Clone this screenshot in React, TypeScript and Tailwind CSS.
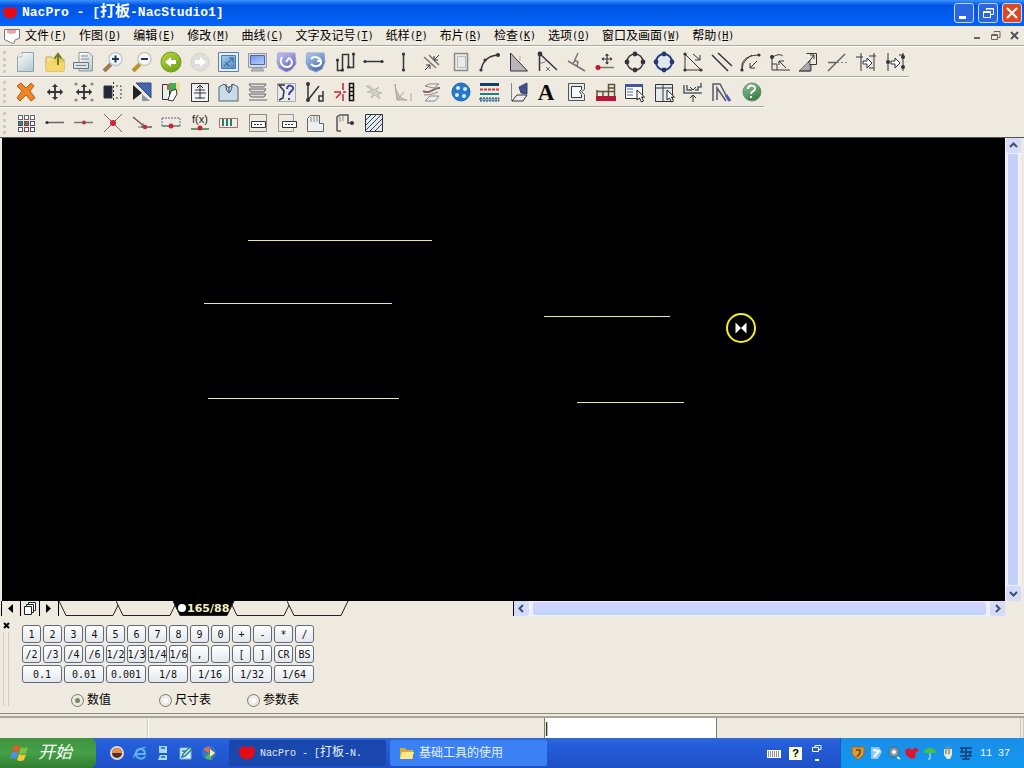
import { useState } from "react";
import type { ReactNode } from "react";

const INK = "#33343a";

type Tool = { name: string; art: ReactNode };

const Dot = ({ x, y, c = INK, r = 1.6 }: { x: number; y: number; c?: string; r?: number }) => (
  <circle cx={x} cy={y} r={r} fill={c} stroke="none" />
);

const Cursor = ({ x, y }: { x: number; y: number }) => (
  <path d={`M${x} ${y}v10l2.500-2 2 4 2-1-2-4h3z`} fill="#fff" stroke="#222" />
);

const Move = ({ x, y, s }: { x: number; y: number; s: number }) => (
  <g transform={`translate(${x} ${y}) scale(${s})`}>
    <path d="M-8 0H8M0-8V8" strokeWidth="2" />
    <path d="M-9 0l3.500-3.500v7zM9 0L5.500-3.500v7zM0-9l-3.500 3.500h7zM0 9l-3.500-3.500h7z" fill={INK} stroke="none" />
  </g>
);

const drawTools: Tool[] = [
  { name: "New", art: <><path d="M9 2.500H20.500V21.500H4.500V7z" fill="url(#paper)" stroke="#8fa3ab" /><path d="M9 2.500V7H4.500" fill="#fff" stroke="#a9b8be" /></> },
  { name: "Open", art: <><path d="M4 7h6l2 2h10v12H4z" fill="url(#gold)" stroke="#c9a241" /><path d="M4 13l18-1v9H4z" fill="#f6d76b" stroke="none" /><path d="M16 15V5M12.500 8.500L16 4l3.500 4.500" stroke="#687c1c" strokeWidth="2" /></> },
  { name: "Print", art: <><path d="M8 2.500h10l3.500 3.500v15H8z" fill="url(#paper)" stroke="#8d979c" /><path d="M2.500 12.500h15v6h-15z" fill="#dce2e4" stroke="#6d767a" /><path d="M5 15.500h10M10 6h7M10 9h8" stroke="#7d888d" /></> },
  { name: "Zoom in", art: <><path d="M11 14L4 21" stroke="#9c7a50" strokeWidth="4" /><circle cx="15.500" cy="9" r="6.500" fill="#f4f8fb" stroke="#c3cad3" strokeWidth="1.500" /><path d="M12 9h7M15.500 5.500v7" stroke="#26335f" strokeWidth="2" /></> },
  { name: "Zoom out", art: <><path d="M11 14L4 21" stroke="#b6952d" strokeWidth="4" /><circle cx="15.500" cy="9" r="6.500" fill="#f8f8f1" stroke="#c9cac6" strokeWidth="1.500" /><path d="M12 9h7" stroke="#26335f" strokeWidth="2" /></> },
  { name: "Back", art: <><circle cx="13" cy="12" r="10" fill="url(#lime)" stroke="#6f9b17" /><path d="M7 12l6-5v3h5v4h-5v3z" fill="#fff" stroke="none" /></> },
  { name: "Forward", art: <><circle cx="13" cy="12" r="9" fill="#dfdfda" stroke="#d3d3cd" /><path d="M19 12l-6-5v3H8v4h5v3z" fill="#fff" stroke="none" /></> },
  { name: "Fit", art: <><path d="M2.500 2.500h20v19h-20z" fill="#e6eef7" stroke="#5b7fa8" /><path d="M5.500 5.500h14v13h-14z" fill="url(#sky)" stroke="#4b7db3" /><path d="M8 16l9-8M13 8h4v4M9 12l4 4" stroke="#2f5d91" /></> },
  { name: "Full screen", art: <><path d="M3.500 3.500h18v14h-18z" fill="#d9dadd" stroke="#969aa3" /><path d="M5.500 5.500h14v9h-14z" fill="url(#screen)" stroke="#4a66b0" /><path d="M8 18h9l2 3H6z" fill="#b9bbc0" stroke="#989ba1" /></> },
  { name: "Undo", art: <><path d="M4 3h17l1 11-5 6-5 2-7-4-2-6z" fill="url(#violet)" stroke="#a3a2d6" /><path d="M8 7c-3 5 0 10 5 10s7-6 2-9l-3 4" fill="none" stroke="#fff" strokeWidth="2" /></> },
  { name: "Redo", art: <><path d="M4 3h17l1 9-3 7-6 3-7-3-3-6z" fill="url(#steel)" stroke="#8ea6d2" /><path d="M8 9c4-4 10-1 10 3s-6 6-10 2M18 11l-4 0" fill="none" stroke="#fff" strokeWidth="2" /></> },
  { name: "Polyline", art: <><path d="M5.500 11v9.500h5v-16h6v13h5v-14" strokeWidth="1.500" /><Dot x={5.5} y={10} /><Dot x={10.500} y={20} /><Dot x={16.500} y={17} /><Dot x={21.500} y={4} /></> },
  { name: "Horizontal line", art: <><path d="M4 11.500h17" strokeWidth="1.500" /><Dot x={4} y={11.5} /><Dot x={21} y={11.5} /></> },
  { name: "Vertical line", art: <><path d="M13.500 3v18" strokeWidth="1.500" /><Dot x={13.5} y={4} /><Dot x={13.5} y={20} /></> },
  { name: "Parallel distance", art: <><path d="M5 7l12 11M10 5l10 10" stroke="#777" strokeWidth="1.500" /><path d="M20 5l-5 5v-4M15 10h4M6 20l5-5v4M11 15H7" /></> },
  { name: "Rectangle", art: <><path d="M6.500 3.500h13v17h-13z" fill="#e9e9e7" stroke="#8a8a8a" strokeWidth="1.500" /><path d="M9.500 6.500v11h8v-11z" fill="none" stroke="#bbb" /></> },
  { name: "Arc", art: <><path d="M4 21c1-9 6-15 17-16" strokeWidth="1.500" /><Dot x={4} y={20} /><Dot x={8} y={10} /><Dot x={21} y={5} r={2} /></> },
  { name: "Set square", art: <><path d="M4.500 3v18h17z" fill="#b7b7b7" /><path d="M14 6v5" stroke="#c98" /></> },
  { name: "Angle", art: <><path d="M4.500 4v17M5 4L22 20" strokeWidth="1.500" /><path d="M5 13c5 0 6-2 6-4M11 17l4 4M15 17l-4 4" stroke="#777" /><Dot x={5} y={4} r={2.4} /></> },
  { name: "Perpendicular", art: <><path d="M4 11l17 10M14 3L9 14M10 10l4 2-1 4" stroke="#777" strokeWidth="1.500" /></> },
  { name: "Move point", art: <><path d="M5 17.500h16" stroke="#777" strokeWidth="1.500" /><Dot x={5} y={17.5} c="#d31329" r={2.5} /><Move x={14} y={9} s={0.6} /></> },
  { name: "Circle", art: <><circle cx="13" cy="12" r="8" strokeWidth="1.500" /><Dot x={13} y={4} r={2.4} /><Dot x={13} y={20} r={2.4} /><Dot x={5} y={12} r={2.4} /><Dot x={21} y={12} r={2.4} /></> },
  { name: "Circle by points", art: <><path d="M4 3h17v18H4z" fill="#dce8ee" stroke="none" /><circle cx="13" cy="12" r="8" stroke="#26366f" strokeWidth="2" /><Dot x={13} y={4} c="#26366f" r={2.4} /><Dot x={13} y={20} c="#26366f" r={2.4} /><Dot x={5} y={12} c="#26366f" r={2.4} /><Dot x={21} y={12} c="#26366f" r={2.4} /></> },
  { name: "Chamfer", art: <><path d="M5 4v16h16zM13 4l7 6M20 5v5h-5" /><Dot x={5} y={4} /><Dot x={5} y={20} /><Dot x={21} y={20} /></> },
  { name: "Parallel", art: <><path d="M3 5l16 16M9 3l14 13" strokeWidth="1.500" /></> },
  { name: "Fillet", art: <><path d="M4 21V14c2-6 8-9 18-9M4 21c0-8 4-12 10-16M19 11l-7 7M12 13v5h5" /><Dot x={21} y={5} /><Dot x={4} y={20} /></> },
  { name: "Round corner", art: <><path d="M5 5v15h18M5 8c5-5 10-3 11-2M19 18l-7-7M12 15v-4h5" /><Dot x={5} y={7} r={2} /><path d="M5 14h5v6" /></> },
  { name: "Scale", art: <><path d="M3 21L14 10v11z" fill="#a9a9a9" stroke="#777" /><path d="M10.500 3.500h10v11h-7M12 13l6-8M14 5h4v4" /><path d="M3 21h12v-6" /></> },
  { name: "Trim", art: <><path d="M3 21L20 4M3 12.500h8" stroke="#666" strokeWidth="1.500" /><path d="M12 12.500h10" stroke="#888" strokeDasharray="2 2" /></> },
  { name: "Extend", art: <><path d="M2 7h7M7 3v18M20 3v18M15 6h7M15 18h5" /><path d="M9 11h4V8l5 5-5 5v-4H9z" fill="#fff" /></> },
  { name: "Extend both", art: <><path d="M5 3v18M20 3v18M16 5h5" /><path d="M8 11h4V8l5 5-5 5v-4H8z" fill="#fff" /><Dot x={5} y={12} r={2} /><Dot x={20} y={7} r={2} /><Dot x={20} y={17} r={2} /></> },
];

const editTools: Tool[] = [
  { name: "Delete", art: <path d="M4 6l4-3 5 5 5-5 3 3-4 5 5 7-4 3-5-6-6 6-3-3 5-7z" fill="#ee8524" stroke="#b95b18" /> },
  { name: "Move", art: <Move x={13} y={12} s={0.9} /> },
  { name: "Move copy", art: <><Move x={13} y={12} s={0.9} />{[[5, 4], [21, 4], [5, 20], [21, 20]].map(([x, y]) => <Dot key={`${x}-${y}`} x={x} y={y} c="#888" />)}</> },
  { name: "Mirror", art: <><path d="M4 6h8v12H4z" fill="#222838" /><path d="M13.500 2v20M16 6h5v12h-5" strokeDasharray="2 2" /></> },
  { name: "Flip", art: <><path d="M4 5v15l9-7z" fill="#222" stroke="none" /><path d="M7 3h15v15z" fill="#4865ac" stroke="#344d8e" /><path d="M13 14v7h8z" fill="#8d949d" stroke="none" /></> },
  { name: "Colour pieces", art: <><path d="M4.500 4.500h7v15h-7z" fill="#e5eeea" /><path d="M11 3h8v8h-8z" fill="#45ac55" stroke="none" /><path d="M18 3h4v9h-4z" fill="#efdf9b" stroke="none" /><path d="M10 20l3-9 5-2 1 5-4 7z" fill="#f8f8f5" /><path d="M10 4v6" stroke="#d95537" strokeWidth="2" /></> },
  { name: "Grain line", art: <><path d="M4.500 3.500h17v18h-17z" fill="#f1f2f3" /><path d="M13 5v14M8 10h10M7 13h12M8 18h10M10 8l3-3 3 3" /></> },
  { name: "Garment", art: <><path d="M3 7l5-3 3 3h3l3-3 5 3v14H3z" fill="#cbdbe8" stroke="#4e6271" /><path d="M10 4c0 6 1 7 3 9 2-2 3-4 3-9M13 7v6" stroke="#294355" /></> },
  { name: "Pleats", art: <path d="M4 4h17l-2 3H6zM4 9h17l-2 3H6zM4 14h17l-2 3H6zM4 20h18" fill="#ddd" stroke="#676767" /> },
  { name: "Query curve", art: <><path d="M3.500 3.500h18v18h-18z" fill="#e8eaeb" stroke="#aaa" /><path d="M11 5H5l5 6-1 7-4 2" strokeWidth="1.500" /><path d="M13 9c0-5 7-4 6 0-1 3-4 2-4 6M15 18v2" stroke="#33469d" strokeWidth="2" /></> },
  { name: "Dart", art: <><path d="M5 4v16L16 6" strokeWidth="1.500" /><path d="M20 11v10h-4v-5h4" strokeWidth="1.500" /><Dot x={5} y={4} r={2} /><Dot x={5} y={20} r={2} /></> },
  { name: "Spread", art: <><path d="M2 12h7M11 3v7M11 14v7M4 18l5-5M14 12h-3" stroke="#c62238" strokeWidth="1.500" /><path d="M17.500 3.500h4v17h-4zM17 7.500h5M17 11.500h5M17 15.500h5" stroke="#111" strokeWidth="1.500" /></> },
  { name: "Cut", art: <path d="M5 6l6 4-5 2 6 1-2 5 4-3 5 4-2-5 4-1-6-2 3-4-5 3-4-4z" fill="#d3d2ca" stroke="#bbb9af" /> },
  { name: "Curve cut", art: <path d="M5 4c1 10 6 15 12 16H7L5 4M7 20L14 12M21 13v8" fill="#c5c4bb" stroke="#a7a69d" /> },
  { name: "Seam", art: <><path d="M6 6l4-2h10l-5 4zM6 21l5-5h9l-4 5z" fill="#eee" stroke="#888" /><path d="M4 11c8 4 10-4 17-3" stroke="#8a6a6b" strokeWidth="2" /><path d="M5 15c6 0 9-1 14-3" stroke="#888" /></> },
  { name: "Button", art: <><circle cx="13" cy="12" r="9" fill="#2877ce" stroke="#2263a5" /><Dot x={10} y={8} c="#d6effc" r={2} /><Dot x={17} y={9} c="#d6effc" r={2} /><Dot x={9} y={15} c="#d6effc" r={2} /><Dot x={16} y={16} c="#d6effc" r={2} /></> },
  { name: "Line type", art: <><path d="M3 4.500h19" stroke="#123f66" strokeWidth="3" /><path d="M3 9.500h19" stroke="#df3740" strokeWidth="2" strokeDasharray="3 1" /><path d="M3 14h19" stroke="#17818b" strokeWidth="2" /><path d="M3 18h19v3H3z" fill="#8fb3c8" stroke="#193f5a" strokeDasharray="2 1" /></> },
  { name: "Annotate", art: <><path d="M5.500 3v18" stroke="#888" /><path d="M6 21l5-6h10l-4 6z" fill="#eee" /><path d="M13 7l8-4v11l-6-1z" fill="#43508a" stroke="#37436f" /></> },
  { name: "Text", art: <text x="11" y="20" textAnchor="middle" fontFamily="Liberation Serif, serif" fontSize="23" fontWeight="bold" fill="#080808" stroke="none">A</text> },
  { name: "Piece", art: <><path d="M4.500 3.500h16v6l-3 2 3 3v6h-16z" fill="#e7eaec" stroke="#555" /><path d="M7.500 6.500h10v3l-2 2 2 3v3h-10z" fill="#f8f8f6" /></> },
  { name: "Grading", art: <><path d="M4 10v6M4 11.500h17.500M10 16v-5M15.500 16V4.500h6V16M15.500 8h6" stroke="#5e5238" strokeWidth="1.500" /><path d="M3 16h20v5H3z" fill="#b31838" stroke="none" /></> },
  { name: "List", art: <><path d="M3.500 4.500h17v14h-17z" fill="#fff" /><path d="M3 4h18v3H3z" fill="#3d58a6" stroke="none" /><path d="M5 9h6M5 12h6M5 15h6" stroke="#4965a0" /><Cursor x={15} y={10} /></> },
  { name: "Table", art: <><path d="M4.500 4.500h17v17h-17zM12 4v17M5 8h16" fill="#e7eaec" /><Cursor x={16} y={10} /></> },
  { name: "Notch", art: <><path d="M4 5v8h18M7 5v5h5M15 10h3V7h3V3" stroke="#52616b" strokeWidth="1.500" /><path d="M13 22v-6M10 18l3-3 3 3M10 7l3 3 3-3" /></> },
  { name: "Compass", art: <><path d="M4 21V4h7l9 17M8 20V8l9 13" stroke="#555a65" strokeWidth="1.500" /><path d="M17 15l4 6" stroke="#5557ba" strokeWidth="3" /></> },
  { name: "Help", art: <><circle cx="14" cy="12" r="9" fill="url(#help)" stroke="#61906a" /><path d="M10 9c0-5 8-4 7 0-1 3-4 2-4 5M13 16v2" stroke="#fff" strokeWidth="2" /></> },
];

const pointTools: Tool[] = [
  { name: "Grid", art: <>{[0, 1, 2].map((r) => [0, 1, 2].map((c) => <rect key={`${r}${c}`} x={5.5 + c * 6} y={4.5 + r * 6} width="4" height="4" fill={r === 1 && c < 2 ? "#398872" : "#f8f8f8"} stroke={r === 0 ? "#62666e" : c === 1 ? "#973a44" : "#48516d"} />))}</> },
  { name: "End point", art: <><path d="M5 11.500h17" stroke="#666" strokeWidth="1.500" /><Dot x={5} y={11.5} /></> },
  { name: "Mid point", art: <><path d="M3 11.500h19" stroke="#777" strokeWidth="1.500" /><Dot x={13} y={11.5} c="#b63546" r={2} /></> },
  { name: "Intersection", art: <><path d="M4 3l18 18M22 3L4 21" stroke="#766" /><Dot x={13} y={12} c="#d52237" r={3} /></> },
  { name: "On line", art: <><path d="M4 6l12 10M12 16h11" stroke="#755" strokeWidth="1.500" /><path d="M9 16h5M14 12v4" stroke="#558469" /><Dot x={16} y={16} c="#cb2438" r={2.2} /></> },
  { name: "Ratio point", art: <><path d="M4 7v8M22 7v8M4 7h18" stroke="#668" strokeDasharray="2 1" /><path d="M4 15h18" stroke="#51826b" strokeWidth="1.500" /><Dot x={13} y={15} c="#c92639" r={2.5} /></> },
  { name: "Function", art: <><text x="13" y="12" textAnchor="middle" fontFamily="Liberation Sans, sans-serif" fontSize="11" fill="#222" stroke="none">f(x)</text><path d="M4 18h18" stroke="#5c9b70" strokeWidth="2" /><Dot x={13} y={17} c="#ca2036" r={2.5} /></> },
  { name: "Scale bar", art: <><path d="M3.500 7.500h18v9h-18z" fill="#eee" stroke="#af6970" /><path d="M7 8v7M11 8v7M15 8v7" stroke="#267f61" strokeWidth="2" /></> },
  { name: "Frame", art: <><path d="M4.500 3.500h17v17h-17z" stroke="#888" /><path d="M6.500 10.500h14v6h-14z" fill="#fff" /><path d="M9 13.500h9" strokeDasharray="2 1" /></> },
  { name: "Frame outside", art: <><path d="M4.500 3.500h15v17h-15z" stroke="#999" /><path d="M8.500 10.500h14v6h-14z" fill="#fff" /><path d="M11 13.500h9" strokeDasharray="2 1" /></> },
  { name: "Pattern", art: <><path d="M4.500 20.500V7.500l3-3h9v8h4v8z" fill="#edf0f1" stroke="#666" /><path d="M8 6v5M11 4v7M14 4v7" stroke="#888" /></> },
  { name: "Pattern edge", art: <><path d="M5 20V6l3-2h8v8h5M5 20h4" stroke="#555" strokeWidth="1.500" /><Dot x={20} y={12} r={2} /><path d="M8 6v5M11 5v5" stroke="#888" /></> },
  { name: "Hatch", art: <><path d="M4.500 3.500h17v17h-17z" fill="#e4ebed" /><path d="M5 9l5-5M5 14L15 4M5 19L20 4M9 20L21 8M14 20l7-7" stroke="#344266" /></> },
];

const menus: [string, string][] = [
  ["文件", "F"], ["作图", "D"], ["编辑", "E"], ["修改", "M"], ["曲线", "C"], ["文字及记号", "T"],
  ["纸样", "P"], ["布片", "R"], ["检查", "K"], ["选项", "O"], ["窗口及画面", "W"], ["帮助", "H"],
];

const keys = [
  "1", "2", "3", "4", "5", "6", "7", "8", "9", "0", "+", "-", "*", "/",
  "/2", "/3", "/4", "/6", "1/2", "1/3", "1/4", "1/6", ",", " ", "[", "]", "CR", "BS",
];
const wideKeys = ["0.1", "0.01", "0.001", "1/8", "1/16", "1/32", "1/64"];

const sizeTabs = ["", "", "165/88", "", ""];

const lines = [
  [246, 102, 430], [202, 165, 390], [206, 260, 397], [542, 178, 668], [575, 264, 682],
];

const gradients: [string, string, string][] = [
  ["paper", "#ffffff", "#bccfd5"], ["gold", "#fff0a0", "#dfa932"], ["lime", "#b9d641", "#76a51b"],
  ["sky", "#a7cff1", "#5b8fc4"], ["screen", "#7694e2", "#a9c8fc"], ["violet", "#c3c4f6", "#6665b9"],
  ["steel", "#b2cdf2", "#4c6ca8"], ["help", "#93c59a", "#397d49"],
];

function Gradients() {
  return (
    <svg width="0" height="0" className="absolute" aria-hidden="true">
      <defs>
        {gradients.map(([id, from, to]) => (
          <linearGradient key={id} id={id} x1="0" y1="0" x2="0.6" y2="1">
            <stop stopColor={from} />
            <stop offset="1" stopColor={to} />
          </linearGradient>
        ))}
      </defs>
    </svg>
  );
}

function Heart({ className }: { className: string }) {
  return (
    <svg viewBox="0 0 16 16" className={className} aria-hidden="true">
      <path d="M8 14L3 12 1 8V4l4-2 3 1 3-1 4 2v4l-2 4z" fill="#e50c16" />
    </svg>
  );
}

function Toolbar({ tools, label, last = false }: { tools: Tool[]; label: string; last?: boolean }) {
  return (
    <div
      role="toolbar"
      aria-label={label}
      className={`flex h-[30px] w-fit items-center pl-[3px] ${last ? "pt-[2px]" : "border-b border-[#aca899] shadow-[0_1px_0_#fff]"}`}
    >
      <span className="mr-1 h-[22px] w-[3px] border-l-[3px] border-dotted border-[#d0ccbd]" />
      {tools.map((tool) => (
        <button key={tool.name} aria-label={tool.name} title={tool.name} className="flex w-[29px] justify-center hover:bg-[#dfe6f2]">
          <svg viewBox="0 0 24 24" width="24" height="24" fill="none" stroke={INK} strokeWidth="1">
            {tool.art}
          </svg>
        </button>
      ))}
    </div>
  );
}

function TitleBar() {
  const box = "flex size-[20px] items-center justify-center rounded-[3px] border border-[#c4d9fb]";
  return (
    <header className="flex h-[26px] items-center gap-1 bg-linear-to-b from-[#3b93ff] via-[#0054e3] via-20% to-[#0463fb] pr-[2px] pl-[2px] text-white">
      <Heart className="size-4" />
      <h1 className="flex-1 whitespace-pre font-['Liberation_Mono','Noto_Sans_CJK_SC',monospace] text-[13px] font-bold">
        NacPro - [<span className="text-[15px]">打板</span>-NacStudio1]
      </h1>
      <button aria-label="Minimize" className={`${box} bg-[#2966df]`}>
        <svg width="14" height="14"><path d="M2 10h7v3H2z" fill="#fff" /></svg>
      </button>
      <button aria-label="Restore" className={`${box} bg-[#2966df]`}>
        <svg width="14" height="14" fill="none" stroke="#fff"><path d="M5.500 4V2.500h7v6H10M5 3h8" /><path d="M2.500 5.500h7v6h-7zM2 6.500h8" /></svg>
      </button>
      <button aria-label="Close" className={`${box} bg-[#dc4a24]`}>
        <svg width="14" height="14" stroke="#fff" strokeWidth="2"><path d="M2 2l10 10M12 2L2 12" /></svg>
      </button>
    </header>
  );
}

function MenuBar() {
  return (
    <nav className="flex h-5 items-center border-b border-[#aca899] pr-[3px] pl-1 shadow-[0_1px_0_#fff]">
      <svg width="16" height="16" viewBox="0 0 16 16" className="mr-[5px]" aria-hidden="true">
        <path d="M.5 1.500h15v9l-4 1-2 4-3-1-6-3z" fill="#fff" stroke="#777" />
        <path d="M3 2h9v3l-5 1-4-1z" fill="#efa5a5" />
      </svg>
      <ul className="flex flex-1 gap-3">
        {menus.map(([label, key]) => (
          <li key={key}>
            <button className="flex items-center text-[12px] leading-4 whitespace-nowrap">
              {label}
              <span className="font-['DejaVu_Sans_Mono',monospace] text-[10px]">
                (<u>{key}</u>)
              </span>
            </button>
          </li>
        ))}
      </ul>
      <div className="flex gap-1">
        <button aria-label="Minimize document">
          <svg width="15" height="14"><path d="M5 8h6v2H5z" fill="#666" /></svg>
        </button>
        <button aria-label="Restore document">
          <svg width="15" height="14" fill="none" stroke="#666"><path d="M6 3.500V2.500h6v6h-2M3.500 5.500h6v5h-6zM3 6.500h7" /></svg>
        </button>
        <button aria-label="Close document">
          <svg width="14" height="14" stroke="#555" strokeWidth="2"><path d="M4 3l7 7M11 3l-7 7" /></svg>
        </button>
      </div>
    </nav>
  );
}

function Arrow({ d, label }: { d: string; label: string }) {
  return (
    <button aria-label={label} className="flex size-[15px] shrink-0 items-center justify-center rounded-xs bg-[#d4dcfa]">
      <svg width="11" height="11" fill="none" stroke="#424f73" strokeWidth="2"><path d={d} /></svg>
    </button>
  );
}

function Canvas() {
  return (
    <div className="flex min-h-[300px] flex-1 border-t border-[#55544e] pr-[3px] pl-[2px]">
      <svg className="h-auto min-w-0 flex-1 self-stretch bg-black" role="img" aria-label="Drawing area">
        {lines.map(([x1, y, x2]) => (
          <path key={`${x1}-${y}`} d={`M${x1} ${y}.5H${x2}`} stroke="#e9e9a6" />
        ))}
        <circle cx="739" cy="190" r="14" fill="none" stroke="#f0f01c" strokeWidth="2" />
        <path d="M733.500 184.500l5.500 5.500 5.500-5.500v11l-5.500-5.500-5.500 5.500z" fill="#fff" />
      </svg>
      <div className="flex w-4 flex-col items-center bg-[#f0f0f4]">
        <Arrow d="M2 7l3.500-3.500L9 7" label="Scroll up" />
        <div className="w-[12px] flex-1 rounded-xs border border-[#eef2ff] bg-[#c5d0f9]" />
        <Arrow d="M2 4l3.500 3.500L9 4" label="Scroll down" />
      </div>
    </div>
  );
}

function SizeTabs() {
  const nav = "flex h-[15px] w-[19px] items-center justify-center border-l border-black";
  return (
    <div className="flex h-[15px] pr-[19px] pl-[1px]">
      <div className="flex flex-1">
        <button aria-label="Previous size" className={nav}>
          <svg width="8" height="11"><path d="M6 1v9L1 5.500z" /></svg>
        </button>
        <button aria-label="All sizes" className={nav}>
          <svg width="12" height="13" fill="#fff" stroke="#222"><path d="M4.500.5h7v8h-7z" /><path d="M2.500 2.500h7v8h-7z" /><path d="M.5 4.500h7v8h-7z" /></svg>
        </button>
        <button aria-label="Next size" className={nav}>
          <svg width="8" height="11"><path d="M1 1v9l5-4.500z" /></svg>
        </button>
        <span className="border-l border-black" />
        {sizeTabs.map((name, i) => (
          <button key={i} aria-label={name || `Size ${i + 1}`} className="relative h-[15px] w-[57px]">
            <svg width="62" height="15" className={name ? "absolute top-0 left-0 z-10" : "absolute top-0 left-0"} aria-hidden="true">
              <path d="M0 0L7 14.500H54L61 0" fill={name ? "#000" : "#eeeadf"} stroke="#222" />
              {name && <circle cx="9" cy="7" r="4" fill="#fff" />}
            </svg>
            {name && (
              <span className="relative z-20 block pl-[14px] text-left font-['DejaVu_Sans',sans-serif] text-[11px] leading-[14px] font-bold text-[#f5f3c0]">
                {name}
              </span>
            )}
          </button>
        ))}
      </div>
      <div className="flex w-1/2 max-w-[492px] items-center border-l border-black bg-[#f0f0fa]">
        <Arrow d="M7 2L3.500 5.500 7 9" label="Scroll left" />
        <div className="mx-1 h-[13px] flex-1 rounded-xs bg-linear-to-b from-[#d5d5ff] to-[#bfd5fa]" />
        <Arrow d="M4 2l3.500 3.500L4 9" label="Scroll right" />
      </div>
    </div>
  );
}

function Keypad() {
  const [mode, setMode] = useState("数值");
  const key = "flex h-[18px] items-center justify-center rounded-[3px] border border-[#5f6b7a] bg-linear-to-b from-white to-[#e3e7ec] whitespace-pre";
  return (
    <section className="flex h-[98px] border-b border-[#8f8c80] pt-[3px]">
      <div className="flex w-[22px] flex-col pl-[3px]">
        <button aria-label="Close panel">
          <svg width="8" height="13" stroke="#000" strokeWidth="2"><path d="M1 4l5 5M6 4L1 9" /></svg>
        </button>
        <span className="h-[74px] w-[6px] border-x border-[#d4d0c0]" />
      </div>
      <div className="pt-[6px]">
        <div className="grid w-[292px] grid-cols-14 gap-[2px] font-['DejaVu_Sans_Mono',monospace] text-[10px] text-[#111]">
          {keys.map((k) => <button key={k} className={key}>{k}</button>)}
          {wideKeys.map((k) => <button key={k} className={`${key} col-span-2`}>{k}</button>)}
        </div>
        <div className="flex pt-[9px] pl-[49px] text-[12px] leading-4">
          {["数值", "尺寸表", "参数表"].map((name) => (
            <label key={name} className="flex w-[88px] items-center gap-[3px]">
              <input
                type="radio"
                name="mode"
                checked={mode === name}
                onChange={() => setMode(name)}
                className="size-[13px] appearance-none rounded-full border border-[#777a72] bg-white bg-clip-content p-[3px] checked:bg-[#6c8b68]"
              />
              {name}
            </label>
          ))}
        </div>
      </div>
    </section>
  );
}

function StatusBar() {
  return (
    <div className="mt-[2px] flex h-[22px] border-t-2 border-[#aaa799]">
      <span className="w-[148px] border-r border-[#d0ccbc] shadow-[1px_0_0_#fff]" />
      <span className="flex-1" />
      <input aria-label="Command" defaultValue="|" className="h-[20px] w-[173px] border-x border-[#7e7c73] bg-white text-[14px] leading-4 outline-none" />
      <span className="w-[30%] border-r-4 border-double border-[#ccc8b8]" />
    </div>
  );
}

function TaskBar() {
  const task = "flex h-[26px] w-[157px] items-center gap-1 rounded-xs pl-[9px] text-[12px] whitespace-nowrap text-[#e4f1ff]";
  return (
    <footer className="flex h-[30px] items-center bg-linear-to-b from-[#3168d5] via-[#245edb] via-20% to-[#1f50c5] text-white">
      <button className="flex h-full w-[96px] items-center gap-2 rounded-r-md bg-linear-to-b from-[#3f923f] via-[#47a047] to-[#2f7d2f] pl-[10px] text-[17px] italic">
        <svg width="20" height="20" viewBox="0 0 20 20" aria-hidden="true">
          <path d="M4 3q3-2 6 0L8 9Q5 7 2 9z" fill="#e55a2a" />
          <path d="M11 4q3 2 7 0l-2 6q-4 2-7 0z" fill="#7fc241" />
          <path d="M2 10q3-2 6 0l-2 6q-3-2-6 0z" fill="#4f8ef0" />
          <path d="M9 11q3 2 7 0l-2 6q-4 2-7 0z" fill="#f5ca32" />
        </svg>
        开始
      </button>
      <div className="flex w-[133px] gap-[7px] pl-[13px]">
        {launchers.map(([name, art]) => (
          <button key={name} aria-label={name}>
            <svg width="16" height="16" viewBox="0 0 16 16" fill="none">{art}</svg>
          </button>
        ))}
      </div>
      <button className={`${task} bg-[#1947ad]`}>
        <Heart className="size-[18px]" />
        <span className="flex items-center whitespace-pre font-['Liberation_Mono','Noto_Sans_CJK_SC',monospace] text-[10px]">
          NacPro - [<span className="text-[12px]">打板</span>-N.
        </span>
      </button>
      <button className={`${task} ml-1 bg-[#3c81f3]`}>
        <svg width="16" height="15" viewBox="0 0 16 15" aria-hidden="true">
          <path d="M1 2h5l2 2h6v9H1z" fill="#d9ab38" />
          <path d="M1 13l2-7h12l-2 7z" fill="#ffe988" />
        </svg>
        基础工具的使用
      </button>
      <span className="flex-1" />
      <div className="flex items-center gap-[8px] pr-[18px]">
        <svg width="14" height="9" aria-label="Keyboard"><path d="M0 1h14v8H0z" fill="#fff" /><path d="M1 3h12M1 5h12M1 7h12" stroke="#222" strokeDasharray="1 1" /></svg>
        <span className="flex size-[13px] items-center justify-center bg-[#f8fbdc] text-[11px] font-bold text-black">?</span>
        <svg width="12" height="18" fill="none" stroke="#fff" aria-label="Restore language bar"><path d="M5 3.500v-2h6v4H8M2.500 3.500h6v4h-6z" /><path d="M5 16h4" strokeWidth="2" /></svg>
      </div>
      <div className="flex h-full w-[184px] items-center gap-[2px] border-l border-[#0b5fc5] bg-linear-to-b from-[#1b8ee8] to-[#0f97ef] pl-[9px]">
        {tray.map(([name, art]) => (
          <svg key={name} width="16" height="16" viewBox="0 0 16 16" fill="none" aria-label={name}>{art}</svg>
        ))}
        <time className="pl-1 font-['Liberation_Mono',monospace] text-[10px] whitespace-pre">11 37</time>
      </div>
    </footer>
  );
}

const launchers: [string, ReactNode][] = [
  ["Media", <><circle cx="8" cy="8" r="7" fill="#ddd9d6" /><circle cx="8" cy="8" r="5" fill="#51302c" /><path d="M3 8a5 5 0 0110 0z" fill="#ef9040" /></>],
  ["Browser", <><path d="M13 11c-2 5-10 2-9-3 1-6 9-5 9 1H5" stroke="#55b5fa" strokeWidth="2" /><path d="M2 13C0 9 11 0 14 3" stroke="#87c9f2" /></>],
  ["Messenger", <><path d="M4 1h8v7H4zM5 10h7v5H3z" fill="#a8d8fb" /><path d="M6 3h4M6 12h4" stroke="#407cc9" strokeWidth="2" /></>],
  ["Desktop", <><path d="M2 3h11v11H2z" fill="#d7eef9" stroke="#72b8dc" /><path d="M5 9l7-7 2 2-7 7-3 1zM4 6h4" stroke="#2a8197" strokeWidth="1.500" /></>],
  ["Player", <><circle cx="8" cy="8" r="7" fill="#3378c7" /><path d="M2 4l6 4 1-7z" fill="#ef6742" /><path d="M8 8l-4 5 7 2z" fill="#62b54a" /><path d="M9 4l5 4-5 4z" fill="#f8ef95" /></>],
];

const tray: [string, ReactNode][] = [
  ["Shield", <><path d="M2 2h12v7l-6 6-6-6z" fill="#dc9a31" stroke="#9a6723" /><path d="M6 5h4v3L7 12" stroke="#634318" strokeWidth="1.500" /></>],
  ["Messages", <><path d="M3 2h8l3 5-4 7H3z" fill="#8cc7f5" /><path d="M5 5l6 1-5 6" stroke="#fff" strokeWidth="2" /></>],
  ["Sound", <><circle cx="8" cy="7" r="5" fill="#889baa" stroke="#4d5f71" /><circle cx="8" cy="7" r="2" fill="#fff" /><path d="M11 12l3 2" stroke="#e6eaed" strokeWidth="2" /></>],
  ["NacPro", <path d="M1 5l4-2 3 2 4-3 3 4-3 1-1 6-4 1-5-4z" fill="#d91929" />],
  ["Umbrella", <><path d="M1 8c2-7 12-7 14 0z" fill="#47bd4c" /><path d="M8 8v6H6" stroke="#dbecc9" /></>],
  ["Safe removal", <><path d="M4 4v6l3 4h3l2-4V4z" fill="#e5e7d6" /><path d="M6 1v8M9 1v8" stroke="#898c80" strokeWidth="1.500" /></>],
  ["Network", <path d="M2 3h12M2 7h12M2 11h12M4 14h8M8 3v11M4 3v4M12 7v4" stroke="#163d70" strokeWidth="1.500" />],
];

export default function App() {
  return (
    <div className="flex min-h-screen flex-col bg-[#eeeadf] font-['Liberation_Sans','Noto_Sans_CJK_SC',sans-serif] text-black">
      <Gradients />
      <TitleBar />
      <MenuBar />
      <div className="pt-[1px]">
        <Toolbar tools={drawTools} label="Draw" />
        <Toolbar tools={editTools} label="Edit" />
        <Toolbar tools={pointTools} label="Points" last />
      </div>
      <Canvas />
      <SizeTabs />
      <Keypad />
      <StatusBar />
      <TaskBar />
    </div>
  );
}
